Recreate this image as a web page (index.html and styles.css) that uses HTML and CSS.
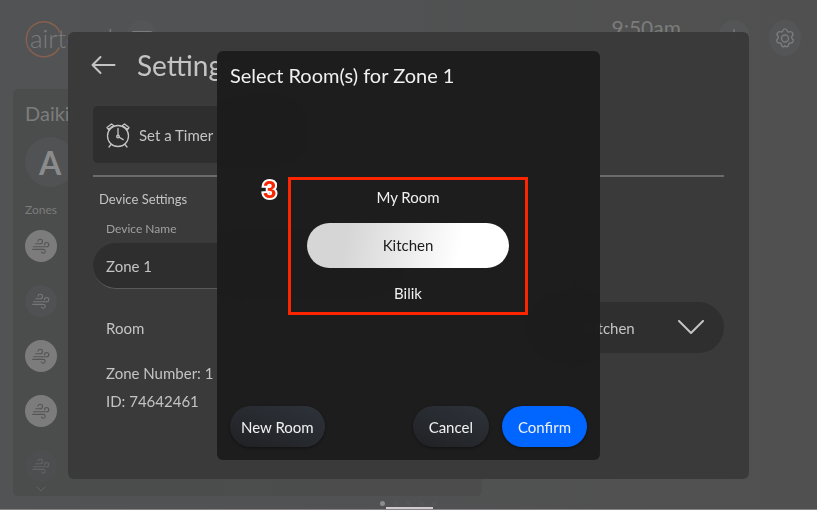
FILE: index.html
```html
<!DOCTYPE html>
<html lang="en">
<head>
    <meta charset="UTF-8">
    <meta name="viewport" content="width=device-width, initial-scale=1.0">
    <title>Zone Settings</title>
    <link rel="stylesheet" href="styles.css">
</head>
<body>
    <svg class="sprite" width="0" height="0" aria-hidden="true">
        <symbol id="wind" viewBox="0 0 24 24">
            <path d="M5 9h6a3 3 0 1 0-3-3.500M2 13h17.500a2.800 2.800 0 1 0-2.800-2.800M1 16.500h14a2.600 2.600 0 1 1-2.500 3.400"/>
        </symbol>
    </svg>

    <div class="home">
        <header class="topbar">
            <div class="logo">
                <svg class="logo-ring" viewBox="0 0 38 38"><path d="M35 12.500A17.500 17.500 0 1 0 34 28"/></svg>
                <span>airtouch</span>
            </div>
            <button class="round-btn" aria-label="Menu">
                <svg viewBox="0 0 24 24"><path d="M2 5h20M2 12h20M2 19h20"/></svg>
            </button>
            <div class="clock">9:50am</div>
            <button class="round-btn" aria-label="Add">
                <svg viewBox="0 0 24 24"><path d="M12 3v18M3 12h18"/></svg>
            </button>
            <button class="round-btn gear" aria-label="Preferences">
                <svg viewBox="0 0 24 24">
                    <path d="M9.600 4.200Q10 2 12 2t2.400 2.200q.4 1.500 2 1.200 2.500-1 3.800 1 1.200 2.300-.6 3.800-1 1 0 2.200 2 1.500 1.300 3.500-.9 1.900-3.100 1.500-1.600-.1-1.800 1.500-.3 2.600-2.200 2.700-1 0-1.800-1.300-.8 1.300-1.800 1.300-1.900-.1-2.200-2.700-.2-1.600-1.800-1.500-2.200.4-3.100-1.500-.7-2 1.300-3.500 1-1.200 0-2.200-1.800-1.500-.6-3.800 1.300-2 3.800-1 1.600.3 2-1.200z"/>
                    <circle cx="12" cy="12.500" r="3.800"/>
                </svg>
            </button>
        </header>

        <main class="unit">
            <h2>Daikin</h2>
            <div class="avatar">A</div>
            <h3>Zones</h3>
            <div class="zones">
                <button class="zone on" aria-label="Zone 1"><svg><use href="#wind"/></svg></button>
                <button class="zone" aria-label="Zone 2"><svg><use href="#wind"/></svg></button>
                <button class="zone on" aria-label="Zone 3"><svg><use href="#wind"/></svg></button>
                <button class="zone on" aria-label="Zone 4"><svg><use href="#wind"/></svg></button>
                <button class="zone faded" aria-label="Zone 5"><svg><use href="#wind"/></svg></button>
            </div>
            <svg class="more" viewBox="0 0 10 6"><path d="M1 1l4 4 4-4"/></svg>
        </main>

        <div class="pager"><i class="current"></i><i></i><i></i><i></i><i></i></div>
    </div>

    <div class="overlay settings-overlay">
        <section class="settings" role="dialog" aria-label="Settings">
            <div class="settings-head">
                <button class="back" aria-label="Back">
                    <svg viewBox="0 0 26 20"><path d="M10 2L2 10l8 8M2 10h22"/></svg>
                </button>
                <h1>Settings</h1>
            </div>
            <button class="timer">
                <svg viewBox="0 0 26 26">
                    <circle cx="13" cy="14" r="10.500"/>
                    <path d="M13 6.500V14M14.200 15.200l4 2.400M6 22.500L4 25M20 22.500l2 2.500"/>
                    <path d="M3.500 7.500L2 5.500 6.500 2l2 1.500zM22.500 7.500L24 5.500 19.500 2l-2 1.500z"/>
                    <circle cx="13" cy="14.500" r="1.300"/>
                </svg>
                Set a Timer
            </button>
            <h2>Device Settings</h2>
            <label class="field-label" for="device-name">Device Name</label>
            <input class="name-input" id="device-name" type="text" value="Zone 1">
            <div class="room-row">
                <label for="room">Room</label>
                <div class="room-select">
                    <select id="room">
                        <option>My Room</option>
                        <option selected>Kitchen</option>
                        <option>Bilik</option>
                    </select>
                    <svg viewBox="0 0 26 14"><path d="M1 1l12 12L25 1"/></svg>
                </div>
            </div>
            <p>Zone Number: 1</p>
            <p>ID: 74642461</p>
        </section>
    </div>

    <div class="overlay picker-overlay">
        <form class="picker" role="dialog" aria-labelledby="picker-title">
            <h2 id="picker-title">Select Room(s) for Zone 1</h2>
            <div class="rooms">
                <span class="step">3</span>
                <label><input type="checkbox" name="room">My Room</label>
                <label><input type="checkbox" name="room" checked>Kitchen</label>
                <label><input type="checkbox" name="room">Bilik</label>
            </div>
            <div class="actions">
                <button type="button" class="new-room">New Room</button>
                <button type="button">Cancel</button>
                <button type="button" class="primary">Confirm</button>
            </div>
        </form>
    </div>

    <div class="home-bar"></div>
</body>
</html>
```

FILE: styles.css
```css
* {
    box-sizing: border-box;
}

body {
    margin: 0;
    font-family: Lato, "Open Sans", sans-serif;
    font-size: 15px;
    line-height: 20px;
    color: #c4c4c4;
    background-color: #505050;
}

h1, h2, h3, p {
    margin: 0;
    font-weight: 400;
}

button, input, select {
    font: inherit;
    color: inherit;
    border: none;
    padding: 0;
    cursor: pointer;
}

svg {
    display: block;
    fill: none;
    stroke: currentColor;
    stroke-linecap: round;
    stroke-linejoin: round;
}

.sprite {
    position: absolute;
}

/* home screen */
.home {
    display: flex;
    flex-direction: column;
    height: 100vh;
    background: linear-gradient(90deg, #525355, #505050);
    border-bottom: 1px solid #858385;
    color: #7c7c7c;
}

.topbar {
    display: flex;
    align-items: flex-start;
    height: 90px;
    padding: 20px 16px 14px 25px;
}

.logo {
    position: relative;
    width: 101px;
    padding-left: 5px;
    font-size: 26px;
    font-weight: 300;
    line-height: 36px;
}

.logo-ring {
    position: absolute;
    top: 0;
    left: 0;
    width: 38px;
    height: 38px;
    color: #85604f;
    stroke-width: 1.5;
}

.round-btn {
    display: grid;
    place-items: center;
    width: 32px;
    height: 36px;
    border-radius: 50%;
    background-color: #535557;
}

.round-btn svg {
    width: 22px;
    height: 22px;
    stroke-width: 1.5;
}

.clock {
    margin-left: auto;
    margin-right: 37px;
    font-size: 21px;
    line-height: 16px;
}

.gear {
    margin-left: 19px;
}

.unit {
    display: flex;
    flex-direction: column;
    width: 469px;
    flex: 1;
    padding: 14px 12px 4px;
    border-radius: 5px;
    margin-left: 13px;
    background: linear-gradient(90deg, #4b4d4c, #4c4c4c);
}

.unit h2 {
    font-size: 20px;
    line-height: 20px;
}

.avatar {
    width: 50px;
    height: 50px;
    margin: 14px 0;
    border-radius: 50%;
    background-color: #505254;
    color: #8b8b8b;
    font-size: 32px;
    font-weight: 700;
    line-height: 52px;
    text-align: center;
}

.unit h3 {
    font-size: 12px;
    line-height: 18px;
}

.zones {
    display: flex;
    flex-direction: column;
    gap: 23px;
    margin-top: 11px;
}

.zone {
    display: grid;
    place-items: center;
    width: 32px;
    height: 32px;
    border-radius: 50%;
    background-color: #4f5153;
    color: #777777;
}

.zone svg {
    width: 18px;
    height: 18px;
    stroke-width: 1.5;
}

.zone.on {
    background-color: #7c7c7c;
    color: #555555;
}

.zone.faded {
    background-color: #4d4e4f;
    color: #636363;
}

.more {
    width: 10px;
    height: 6px;
    margin: 4px 11px 0;
    color: #636363;
}

.pager {
    display: flex;
    justify-content: center;
    gap: 8px;
    padding: 5px 0 3px;
}

.pager i {
    width: 5px;
    height: 5px;
    border-radius: 50%;
    background-color: #555557;
}

.pager .current {
    background-color: #8c8c8c;
}

.overlay {
    position: fixed;
    inset: 0;
    display: flex;
    justify-content: center;
}

/* zone settings */
.settings-overlay {
    padding: 32px 68px 31px;
}

.settings {
    flex: 1;
    padding: 16px 25px;
    border-radius: 6px;
    background-color: rgba(57, 57, 57, 0.96);
    backdrop-filter: blur(12px);
}

.settings-head {
    display: flex;
    align-items: center;
    gap: 20px;
    height: 34px;
    margin-left: -3px;
}

.back {
    background: none;
}

.back svg {
    width: 27px;
    height: 20px;
    stroke-width: 2;
}

.settings h1 {
    font-size: 28px;
    line-height: 36px;
}

.timer {
    display: flex;
    align-items: center;
    gap: 8px;
    width: 200px;
    height: 57px;
    margin-top: 24px;
    padding: 0 12px;
    border-radius: 5px;
    background-color: #2e2e2e;
}

.timer svg {
    width: 26px;
    height: 26px;
    stroke-width: 1.3;
}

.settings h2 {
    margin-top: 12px;
    padding: 12px 6px 10px;
    border-top: 2px solid #6b6b6b;
    font-size: 13px;
    line-height: 20px;
}

.field-label {
    display: block;
    padding-left: 13px;
    font-size: 12px;
    line-height: 20px;
    color: #a0a0a0;
}

.name-input {
    display: block;
    width: 300px;
    height: 46px;
    margin-top: 4px;
    padding: 0 13px;
    border-bottom: 1px solid #5a5a5a;
    border-radius: 23px;
    background-color: #2e2e2e;
}

.room-row {
    display: flex;
    align-items: center;
    justify-content: space-between;
    margin: 13px 0 6px;
    padding-left: 13px;
}

.room-select {
    position: relative;
}

.room-select select {
    appearance: none;
    width: 188px;
    height: 51px;
    padding-left: 48px;
    border-radius: 26px;
    background-color: #2f2f2f;
}

.room-select svg {
    position: absolute;
    top: 18px;
    right: 20px;
    width: 26px;
    height: 14px;
    stroke-width: 2;
    pointer-events: none;
}

.settings p {
    padding-left: 13px;
    line-height: 28px;
}

/* room picker */
.picker-overlay {
    padding: 51px 20px 50px;
}

.picker {
    display: flex;
    flex-direction: column;
    width: 383px;
    padding: 12px 13px 13px;
    border-radius: 6px;
    background-color: rgba(28, 28, 28, 0.97);
    backdrop-filter: blur(12px);
    color: #f0f0f0;
}

.picker h2 {
    font-size: 20px;
    line-height: 24px;
}

.rooms {
    position: relative;
    display: grid;
    gap: 9px;
    width: 240px;
    margin: 90px auto 0 58px;
    padding: 1px 16px 2px;
    border: 3px solid #fb2600;
}

.rooms label {
    height: 33px;
    border-radius: 23px;
    line-height: 33px;
    text-align: center;
    cursor: pointer;
}

.rooms label:has(:checked) {
    height: 45px;
    line-height: 45px;
    color: #1c1c1c;
    background: linear-gradient(100deg, #d6d6d6 20%, #ffffff 75%);
}

.rooms input {
    position: absolute;
    opacity: 0;
}

.step {
    position: absolute;
    top: -2px;
    left: -28px;
    font-family: "Liberation Sans", sans-serif;
    font-size: 24px;
    font-weight: 700;
    line-height: 24px;
    color: #fb2600;
    -webkit-text-stroke: 4px #ffffff;
    paint-order: stroke fill;
}

.actions {
    display: flex;
    gap: 13px;
    margin-top: auto;
}

.actions button {
    height: 41px;
    padding: 0 16px;
    border-radius: 21px;
    background: linear-gradient(20deg, #202124, #2e333a);
    box-shadow: 0 1px 3px rgba(0, 0, 0, 0.4);
}

.actions .new-room {
    margin-right: auto;
    padding: 0 11px;
}

.actions .primary {
    background: #0066ff;
}

.home-bar {
    position: fixed;
    bottom: 1px;
    left: 50%;
    width: 47px;
    height: 2px;
    margin-left: -23px;
    background-color: #cfcbce;
}
```
